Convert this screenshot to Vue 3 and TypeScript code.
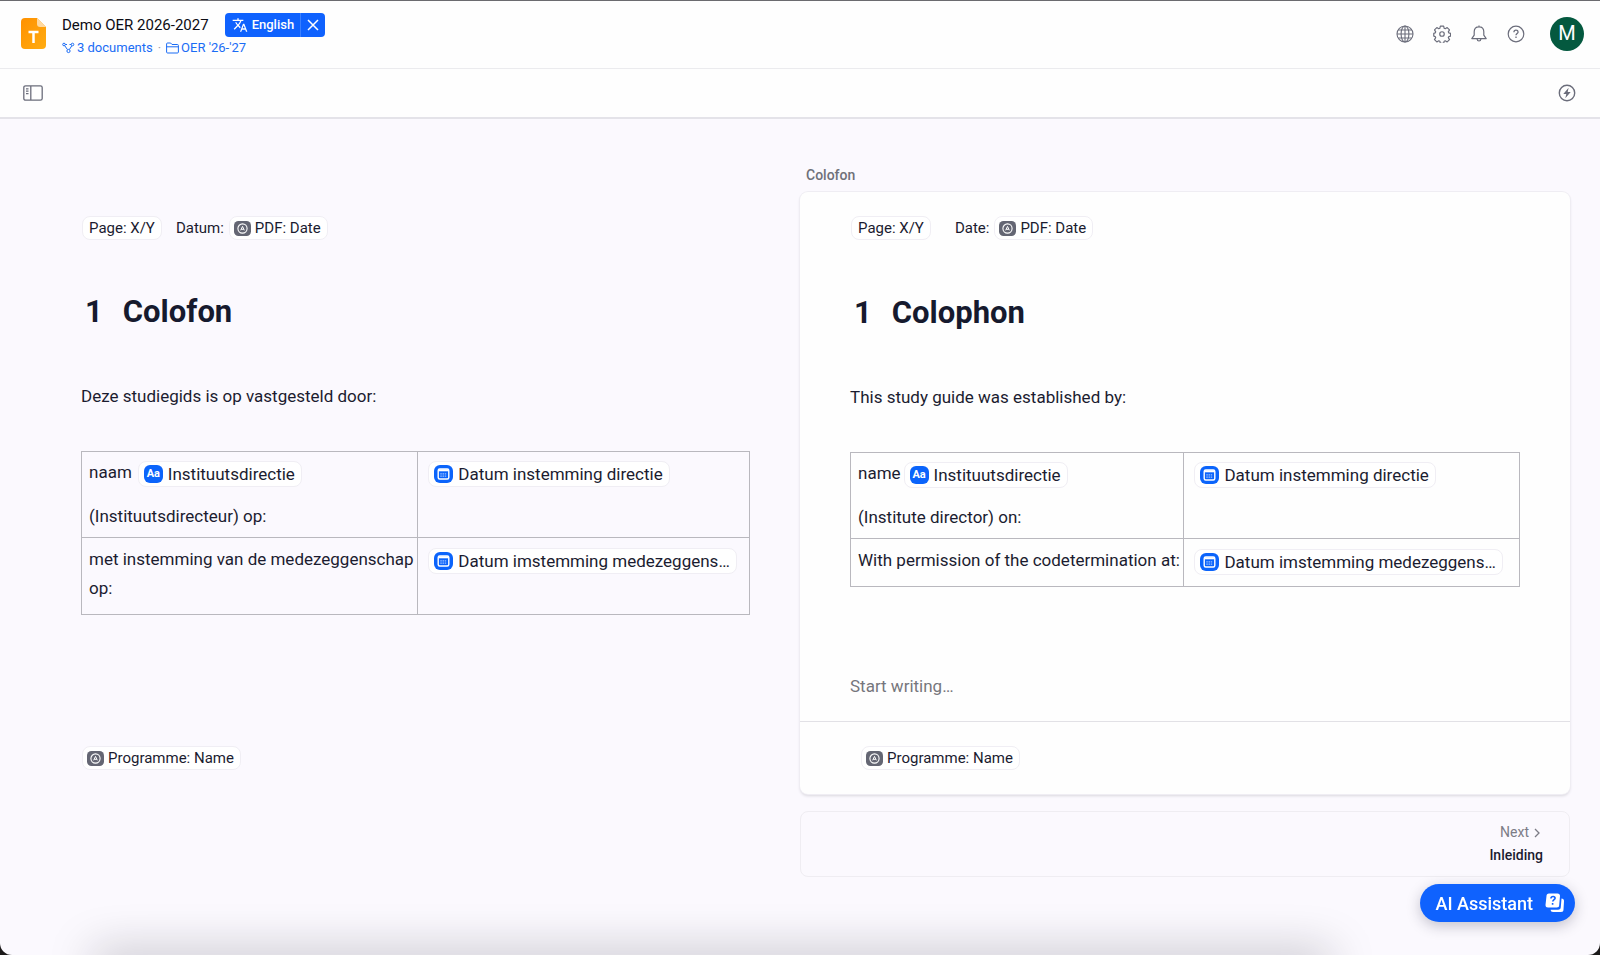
<script setup lang="ts">
interface Cell {
  lines: string[]
  tag?: { kind: 'text' | 'date'; label: string }
}

interface Pane {
  id: string
  editable: boolean
  dateLabel: string
  title: string
  intro: string
  rows: Cell[][]
}

const panes: Pane[] = [
  {
    id: 'source',
    editable: false,
    dateLabel: 'Datum:',
    title: 'Colofon',
    intro: 'Deze studiegids is op vastgesteld door:',
    rows: [
      [
        { lines: ['naam', '(Instituutsdirecteur) op:'], tag: { kind: 'text', label: 'Instituutsdirectie' } },
        { lines: [], tag: { kind: 'date', label: 'Datum instemming directie' } },
      ],
      [
        { lines: ['met instemming van de medezeggenschap op:'] },
        { lines: [], tag: { kind: 'date', label: 'Datum imstemming medezeggens…' } },
      ],
    ],
  },
  {
    id: 'translation',
    editable: true,
    dateLabel: 'Date:',
    title: 'Colophon',
    intro: 'This study guide was established by:',
    rows: [
      [
        { lines: ['name', '(Institute director) on:'], tag: { kind: 'text', label: 'Instituutsdirectie' } },
        { lines: [], tag: { kind: 'date', label: 'Datum instemming directie' } },
      ],
      [
        { lines: ['With permission of the codetermination at:'] },
        { lines: [], tag: { kind: 'date', label: 'Datum imstemming medezeggens…' } },
      ],
    ],
  },
]
</script>

<template>
  <div class="app">
    <svg class="defs" aria-hidden="true">
      <symbol id="i-auto" viewBox="0 0 17 15">
        <rect width="17" height="15" rx="4.500" fill="#646673" />
        <circle cx="8.500" cy="7.500" r="4.600" fill="none" stroke="#fff" stroke-width="1.100" />
        <path d="M6.700 9.300 8.500 5.400l1.800 3.900M7.300 8.300h2.400" fill="none" stroke="#fff" stroke-width="1" />
      </symbol>
      <symbol id="i-date" viewBox="0 0 19 18">
        <rect width="19" height="18" rx="6" fill="#0b64fb" />
        <rect x="4.200" y="4" width="10.600" height="10" rx="1.500" fill="none" stroke="#fff" stroke-width="1.400" />
        <path d="M4.200 5.300h10.600" stroke="#fff" stroke-width="2" />
        <path d="M6.300 8.800h6.400M6.300 11.200h6.400" stroke="#9cc0ff" stroke-width="1.300" stroke-dasharray="1.500 .7" />
      </symbol>
    </svg>

    <header class="topbar">
      <svg class="doc-logo" viewBox="0 0 25 31" aria-hidden="true">
        <defs>
          <linearGradient id="doc-fill" x1="0" y1="0" x2="1" y2="1">
            <stop offset="0" stop-color="#ff9100" />
            <stop offset="1" stop-color="#ffac12" />
          </linearGradient>
        </defs>
        <path d="M4 0h12l9 9v18a4 4 0 0 1-4 4H4a4 4 0 0 1-4-4V4a4 4 0 0 1 4-4z" fill="url(#doc-fill)" />
        <path d="M16 0l9 9h-6a3 3 0 0 1-3-3z" fill="#ffd9a0" />
        <path d="M7.500 14h10M12.500 14v11" stroke="#fff" stroke-width="2.500" fill="none" />
      </svg>
      <div class="doc-info">
        <div class="doc-line">
          <span class="doc-title">Demo OER 2026-2027</span>
          <div class="lang">
            <button type="button" class="lang-name">
              <svg width="16" height="16" viewBox="0 0 24 24" fill="#fff" aria-hidden="true">
                <path d="m12.870 15.070-2.540-2.510.03-.03A17.520 17.520 0 0 0 14.070 6H17V4h-7V2H8v2H1v2h11.170C11.500 7.920 10.440 9.750 9 11.350 8.070 10.320 7.300 9.190 6.690 8h-2c.73 1.630 1.730 3.170 2.980 4.560l-5.090 5.020L4 19l5-5 3.110 3.110zM18.500 10h-2L12 22h2l1.120-3h4.750L21 22h2zm-2.620 7 1.620-4.330L19.120 17z" />
              </svg>
              English
            </button>
            <button type="button" class="lang-close" aria-label="Close translation">
              <svg width="12" height="12" viewBox="0 0 12 12" aria-hidden="true">
                <path d="M1 1l10 10M11 1 1 11" stroke="#fff" stroke-width="1.500" />
              </svg>
            </button>
          </div>
        </div>
        <nav class="doc-links">
          <a href="#documents">
            <svg width="13" height="12" viewBox="0 0 13 12" fill="none" stroke="#1a6cf5" aria-hidden="true">
              <circle cx="2" cy="2.500" r="1.300" /><circle cx="10.500" cy="2.500" r="1.300" /><circle cx="6.500" cy="9" r="1.600" />
              <path d="M3.300 2.500h1.700M7.500 2.500h1.700M2.800 3.800l2.600 3.700M9.800 3.800 7.400 7.500" />
            </svg>
            3 documents
          </a>
          <span class="dot">·</span>
          <a href="#folder">
            <svg width="13" height="12" viewBox="0 0 13 12" fill="none" stroke="#1a6cf5" stroke-linejoin="round" aria-hidden="true">
              <path d="M.6 10V2q0-1 1-1h3l1.400 1.500h5.400q1 0 1 1V10q0 1-1 1H1.600q-1 0-1-1zM.6 4.800h11.800" />
            </svg>
            OER '26-'27
          </a>
        </nav>
      </div>
      <div class="actions">
        <button type="button" class="icon-btn" aria-label="Language">
          <svg width="18" height="18" viewBox="0 0 18 18" fill="none" stroke="#6b6d7b" stroke-width="1.100" aria-hidden="true">
            <circle cx="9" cy="9" r="8" /><ellipse cx="9" cy="9" rx="3.900" ry="8" />
            <path d="M9 1v16M1 9h16M2.200 5h13.600M2.200 13h13.600" />
          </svg>
        </button>
        <button type="button" class="icon-btn" aria-label="Settings">
          <svg width="18" height="18" viewBox="0 0 24 24" fill="none" stroke="#6b6d7b" stroke-width="1.600" stroke-linejoin="round" aria-hidden="true">
            <circle cx="12" cy="12" r="3" />
            <path d="M9.800 1.500h4.400l.7 2.900 1.400.6 2.600-1.600 3.100 3.100-1.600 2.600.6 1.400 2.500.7v3.600l-2.500.7-.6 1.400 1.600 2.600-3.100 3.100-2.600-1.600-1.400.6-.7 2.900H9.800l-.7-2.900-1.400-.6-2.600 1.600L2 19.500l1.600-2.600-.6-1.400-2-.7v-3.600l2-.7.6-1.400L2 6.500l3.100-3.100L7.700 5l1.400-.6z" />
          </svg>
        </button>
        <button type="button" class="icon-btn" aria-label="Notifications">
          <svg width="18" height="18" viewBox="0 0 18 18" fill="none" stroke="#6b6d7b" stroke-width="1.200" stroke-linejoin="round" aria-hidden="true">
            <path d="M9 1.800c-3 0-4.800 2.200-4.800 5v3.400L1.800 13.600h14.400l-2.400-3.400V6.800c0-2.800-1.800-5-4.800-5zM9 .4v1.400M7 14q.3 2 2 2t2-2" />
          </svg>
        </button>
        <button type="button" class="icon-btn" aria-label="Help">
          <svg width="18" height="18" viewBox="0 0 18 18" fill="none" stroke="#6b6d7b" stroke-width="1.200" aria-hidden="true">
            <circle cx="9" cy="9" r="7.800" />
            <path d="M6.900 7.200q.1-2 2.100-2t2.100 1.800c0 1.400-2.100 1.500-2.100 3.200M9 11.600v1.500" stroke-width="1.300" />
          </svg>
        </button>
        <button type="button" class="avatar" aria-label="Account">M</button>
      </div>
    </header>

    <div class="toolbar">
      <button type="button" class="icon-btn" aria-label="Toggle sidebar">
        <svg width="20" height="16" viewBox="0 0 20 16" fill="none" stroke="#6b6d7b" stroke-width="1.300" aria-hidden="true">
          <rect x=".8" y=".8" width="18.400" height="14.400" rx="1.800" />
          <path d="M7.800 1v14M3 3.800h2.500M3 6.200h2.500M3 8.600h2.500" />
        </svg>
      </button>
      <button type="button" class="icon-btn" aria-label="Quick actions">
        <svg width="18" height="18" viewBox="0 0 18 18" aria-hidden="true">
          <circle cx="9" cy="9" r="7.700" fill="none" stroke="#6b6d7b" stroke-width="1.400" />
          <path d="M10.600 3.800 5.300 10h3l-1 4.300L12.700 8h-3z" fill="#6b6d7b" />
        </svg>
      </button>
    </div>

    <main class="workspace">
      <h2 class="section-name">Colofon</h2>

      <article v-for="pane in panes" :key="pane.id" class="pane" :class="pane.id">
        <div class="pane-head">
          <span class="chip small">Page: X/Y</span>
          <span class="date-label">{{ pane.dateLabel }}</span>
          <span class="chip small">
            <svg class="auto-icon" aria-hidden="true"><use href="#i-auto" /></svg>PDF: Date
          </span>
        </div>

        <div class="pane-body">
          <h1><span class="num">1</span>{{ pane.title }}</h1>
          <p class="intro">{{ pane.intro }}</p>
          <table>
            <tbody>
              <tr v-for="(row, r) in pane.rows" :key="r">
                <td v-for="(cell, c) in row" :key="c">
                  <div class="cell-line">
                    <span v-if="cell.lines[0]">{{ cell.lines[0] }}</span>
                    <span v-if="cell.tag" class="chip">
                      <span v-if="cell.tag.kind === 'text'" class="text-icon">Aa</span>
                      <svg v-else class="date-icon" aria-hidden="true"><use href="#i-date" /></svg>
                      {{ cell.tag.label }}
                    </span>
                  </div>
                  <p v-if="cell.lines[1]" class="cell-next">{{ cell.lines[1] }}</p>
                </td>
              </tr>
            </tbody>
          </table>
          <input v-if="pane.editable" class="writer" type="text" placeholder="Start writing…" aria-label="Start writing" />
        </div>

        <footer class="pane-foot">
          <span class="chip small">
            <svg class="auto-icon" aria-hidden="true"><use href="#i-auto" /></svg>Programme: Name
          </span>
        </footer>
      </article>

      <a class="next" href="#inleiding">
        <span class="next-label">
          Next
          <svg width="6" height="10" viewBox="0 0 6 10" fill="none" stroke="#7c7c86" stroke-width="1.300" aria-hidden="true"><path d="M1 1l4 4-4 4" /></svg>
        </span>
        <span class="next-title">Inleiding</span>
      </a>
    </main>

    <div class="dock-shade"></div>

    <button type="button" class="assistant">
      AI Assistant
      <svg width="20" height="20" viewBox="0 0 20 20" aria-hidden="true">
        <path d="M16.500 5.500a2.500 2.500 0 0 1 2.500 2.500l-.5 8.500a2.500 2.500 0 0 1-2.500 2.500H8a2.500 2.500 0 0 1-2.500-2.300h7.500A2.800 2.800 0 0 0 15.800 14z" fill="#fff" />
        <path d="M4 .5h8.500A2.500 2.500 0 0 1 15 3l-.8 9a2.500 2.500 0 0 1-2.500 2.500H3A2.500 2.500 0 0 1 .5 12l1-9A2.500 2.500 0 0 1 4 .5z" fill="#fff" />
        <path d="M5.900 5.500q.2-2 2.200-2t2 1.700c0 1.500-2.200 1.500-2.300 3.300M7.600 10v1.700" stroke="#0f62fe" stroke-width="1.600" fill="none" />
      </svg>
    </button>
  </div>
</template>

<style>
html {
  background: #1c1a1a;
}
</style>

<style scoped>
.app {
  position: relative;
  box-sizing: border-box;
  min-height: 100vh;
  overflow: hidden;
  border-top: 1px solid #6b6b6f;
  border-radius: 0 0 12px 12px;
  background: #fbf9fe;
  color: #1b1c30;
  font-family: Roboto, "Liberation Sans", sans-serif;
  font-size: 17px;
  line-height: 29px;
}

.defs {
  position: absolute;
  width: 0;
  height: 0;
}

svg {
  display: block;
  flex: none;
}

button {
  padding: 0;
  border: 0;
  background: none;
  color: inherit;
  font: inherit;
  cursor: pointer;
}

.topbar {
  display: flex;
  align-items: center;
  box-sizing: border-box;
  height: 68px;
  padding: 0 16px 2px 21px;
  border-bottom: 1px solid #ebebee;
  background: #fefefe;
}

.doc-logo {
  width: 25px;
  height: 31px;
}

.doc-info {
  display: flex;
  flex-direction: column;
  margin-left: 16px;
  padding-top: 4px;
}

.doc-line {
  display: flex;
  align-items: center;
  gap: 16px;
}

.doc-title {
  color: #0c0c14;
  font-size: 15px;
  line-height: 24px;
}

.lang {
  display: flex;
  height: 24px;
  border-radius: 4px;
  background: #0f62fe;
  color: #fff;
}

.lang-name {
  display: flex;
  align-items: center;
  gap: 4px;
  padding: 0 6px 0 7px;
  font-size: 13px;
  font-weight: 500;
}

.lang-close {
  display: flex;
  align-items: center;
  padding: 0 6px;
  border-left: 1px solid #3a80ff;
}

.doc-links {
  display: flex;
  gap: 5px;
  font-size: 13px;
  line-height: 22px;
}

.doc-links a {
  display: flex;
  align-items: center;
  gap: 2px;
  color: #1a6cf5;
  text-decoration: none;
}

.dot {
  color: #a0a0aa;
}

.actions {
  display: flex;
  align-items: center;
  gap: 19px;
  margin-left: auto;
}

.avatar {
  width: 34px;
  height: 34px;
  margin-left: 6px;
  border-radius: 50%;
  background: #04593f;
  color: #fff;
  font-size: 20px;
}

.toolbar {
  display: flex;
  align-items: center;
  justify-content: space-between;
  box-sizing: border-box;
  height: 50px;
  padding: 0 24px 0 23px;
  border-bottom: 2px solid #e4e3e9;
  background: #fefefe;
}

.workspace {
  display: grid;
  grid-template-columns: minmax(0, 1fr) minmax(0, 1fr);
  grid-template-rows: 73px auto auto;
  padding: 0 30px 60px;
}

.section-name {
  grid-column: 2;
  align-self: end;
  margin: 0;
  padding: 0 6px 6px;
  color: #6f7079;
  font-size: 14px;
  font-weight: 500;
  line-height: 22px;
}

.pane {
  display: flex;
  flex-direction: column;
  border-radius: 8px;
}

.source {
  grid-column: 1;
}

.translation {
  background: #fefefe;
  box-shadow: 0 0 0 1px #efedf3, 0 2px 3px #d9d7de;
}

.pane-head {
  display: flex;
  align-items: center;
  height: 72px;
  padding: 0 51px;
  font-size: 15px;
}

.translation .pane-head {
  border-bottom: 1px solid transparent;
}

.date-label {
  margin: 0 5px 0 14px;
}

.translation .date-label {
  margin-left: 24px;
}

.chip {
  display: inline-flex;
  align-items: center;
  gap: 5px;
  height: 24px;
  padding: 0 6px 0 5px;
  border: 1px solid #f0eef4;
  border-radius: 8px;
  background: #fff;
  white-space: nowrap;
}

.chip.small {
  gap: 4px;
  height: 22px;
  padding: 0 6px 0 4px;
  font-size: 15px;
}

.pane-head .chip:first-child {
  padding: 0 6px;
}

.auto-icon {
  width: 17px;
  height: 15px;
}

.date-icon {
  width: 19px;
  height: 18px;
}

.text-icon {
  width: 19px;
  height: 18px;
  border-radius: 6px;
  background: #0b64fb;
  color: #fff;
  font-size: 11px;
  font-weight: 700;
  line-height: 18px;
  text-align: center;
}

.pane-body {
  flex: 1;
  padding: 28px 50px 20px;
}

h1 {
  display: flex;
  gap: 20px;
  margin: 0 0 50px;
  padding-left: 4px;
  color: #161a2e;
  font-size: 31px;
  font-weight: 700;
  line-height: 40px;
}

.intro {
  margin: 0 0 40px;
}

table {
  width: 100%;
  border-collapse: collapse;
  table-layout: fixed;
}

td {
  padding: 6px 1px 6px 7px;
  border: 1px solid #b9b8be;
  vertical-align: top;
}

.source td:first-child {
  width: 49%;
}

.translation td:first-child {
  width: 48.5%;
}

tr:last-child td {
  padding-top: 7px;
  padding-bottom: 11px;
}

td:last-child {
  padding-left: 10px;
}

.cell-line {
  display: flex;
  align-items: flex-end;
  gap: 6px;
}

.translation .cell-line {
  gap: 3px;
}

.cell-next {
  margin: 15px 0 0;
}

.cell-line .chip {
  margin-top: 3px;
}

.writer {
  display: block;
  box-sizing: border-box;
  width: 100%;
  height: 29px;
  margin-top: 85px;
  padding: 0;
  border: 0;
  outline: 0;
  background: none;
  color: inherit;
  font: inherit;
}

.writer::placeholder {
  color: #76767c;
  opacity: 1;
}

.pane-foot {
  display: flex;
  align-items: center;
  height: 72px;
  padding: 0 51px;
  border-top: 1px solid transparent;
}

.source .pane-head,
.source .pane-foot {
  padding-left: 52px;
}

.source .pane-body {
  padding-left: 51px;
}

.translation .pane-foot {
  padding: 0 61px;
  border-color: #e2e1e6;
}

.next {
  grid-column: 2;
  display: flex;
  flex-direction: column;
  align-items: flex-end;
  margin-top: 17px;
  padding: 9px 26px;
  border: 1px solid #efedf2;
  border-radius: 8px;
  color: #1b1c30;
  font-size: 14px;
  line-height: 23px;
  text-decoration: none;
}

.next-label {
  display: flex;
  align-items: center;
  gap: 5px;
  padding-right: 3px;
  color: #7c7c86;
}

.next-title {
  font-weight: 500;
}

.dock-shade {
  position: absolute;
  right: 17%;
  bottom: -20px;
  left: 6%;
  height: 20px;
  box-shadow: 0 0 46px 3px rgba(20, 18, 30, 0.27);
}

.assistant {
  position: fixed;
  right: 25px;
  bottom: 33px;
  display: flex;
  align-items: center;
  gap: 12px;
  height: 38px;
  padding: 0 10px 0 15px;
  border-radius: 19px;
  background: #0f62fe;
  box-shadow: 0 4px 14px rgba(30, 30, 60, 0.25);
  color: #fff;
  font-size: 18px;
  font-weight: 500;
}
</style>
